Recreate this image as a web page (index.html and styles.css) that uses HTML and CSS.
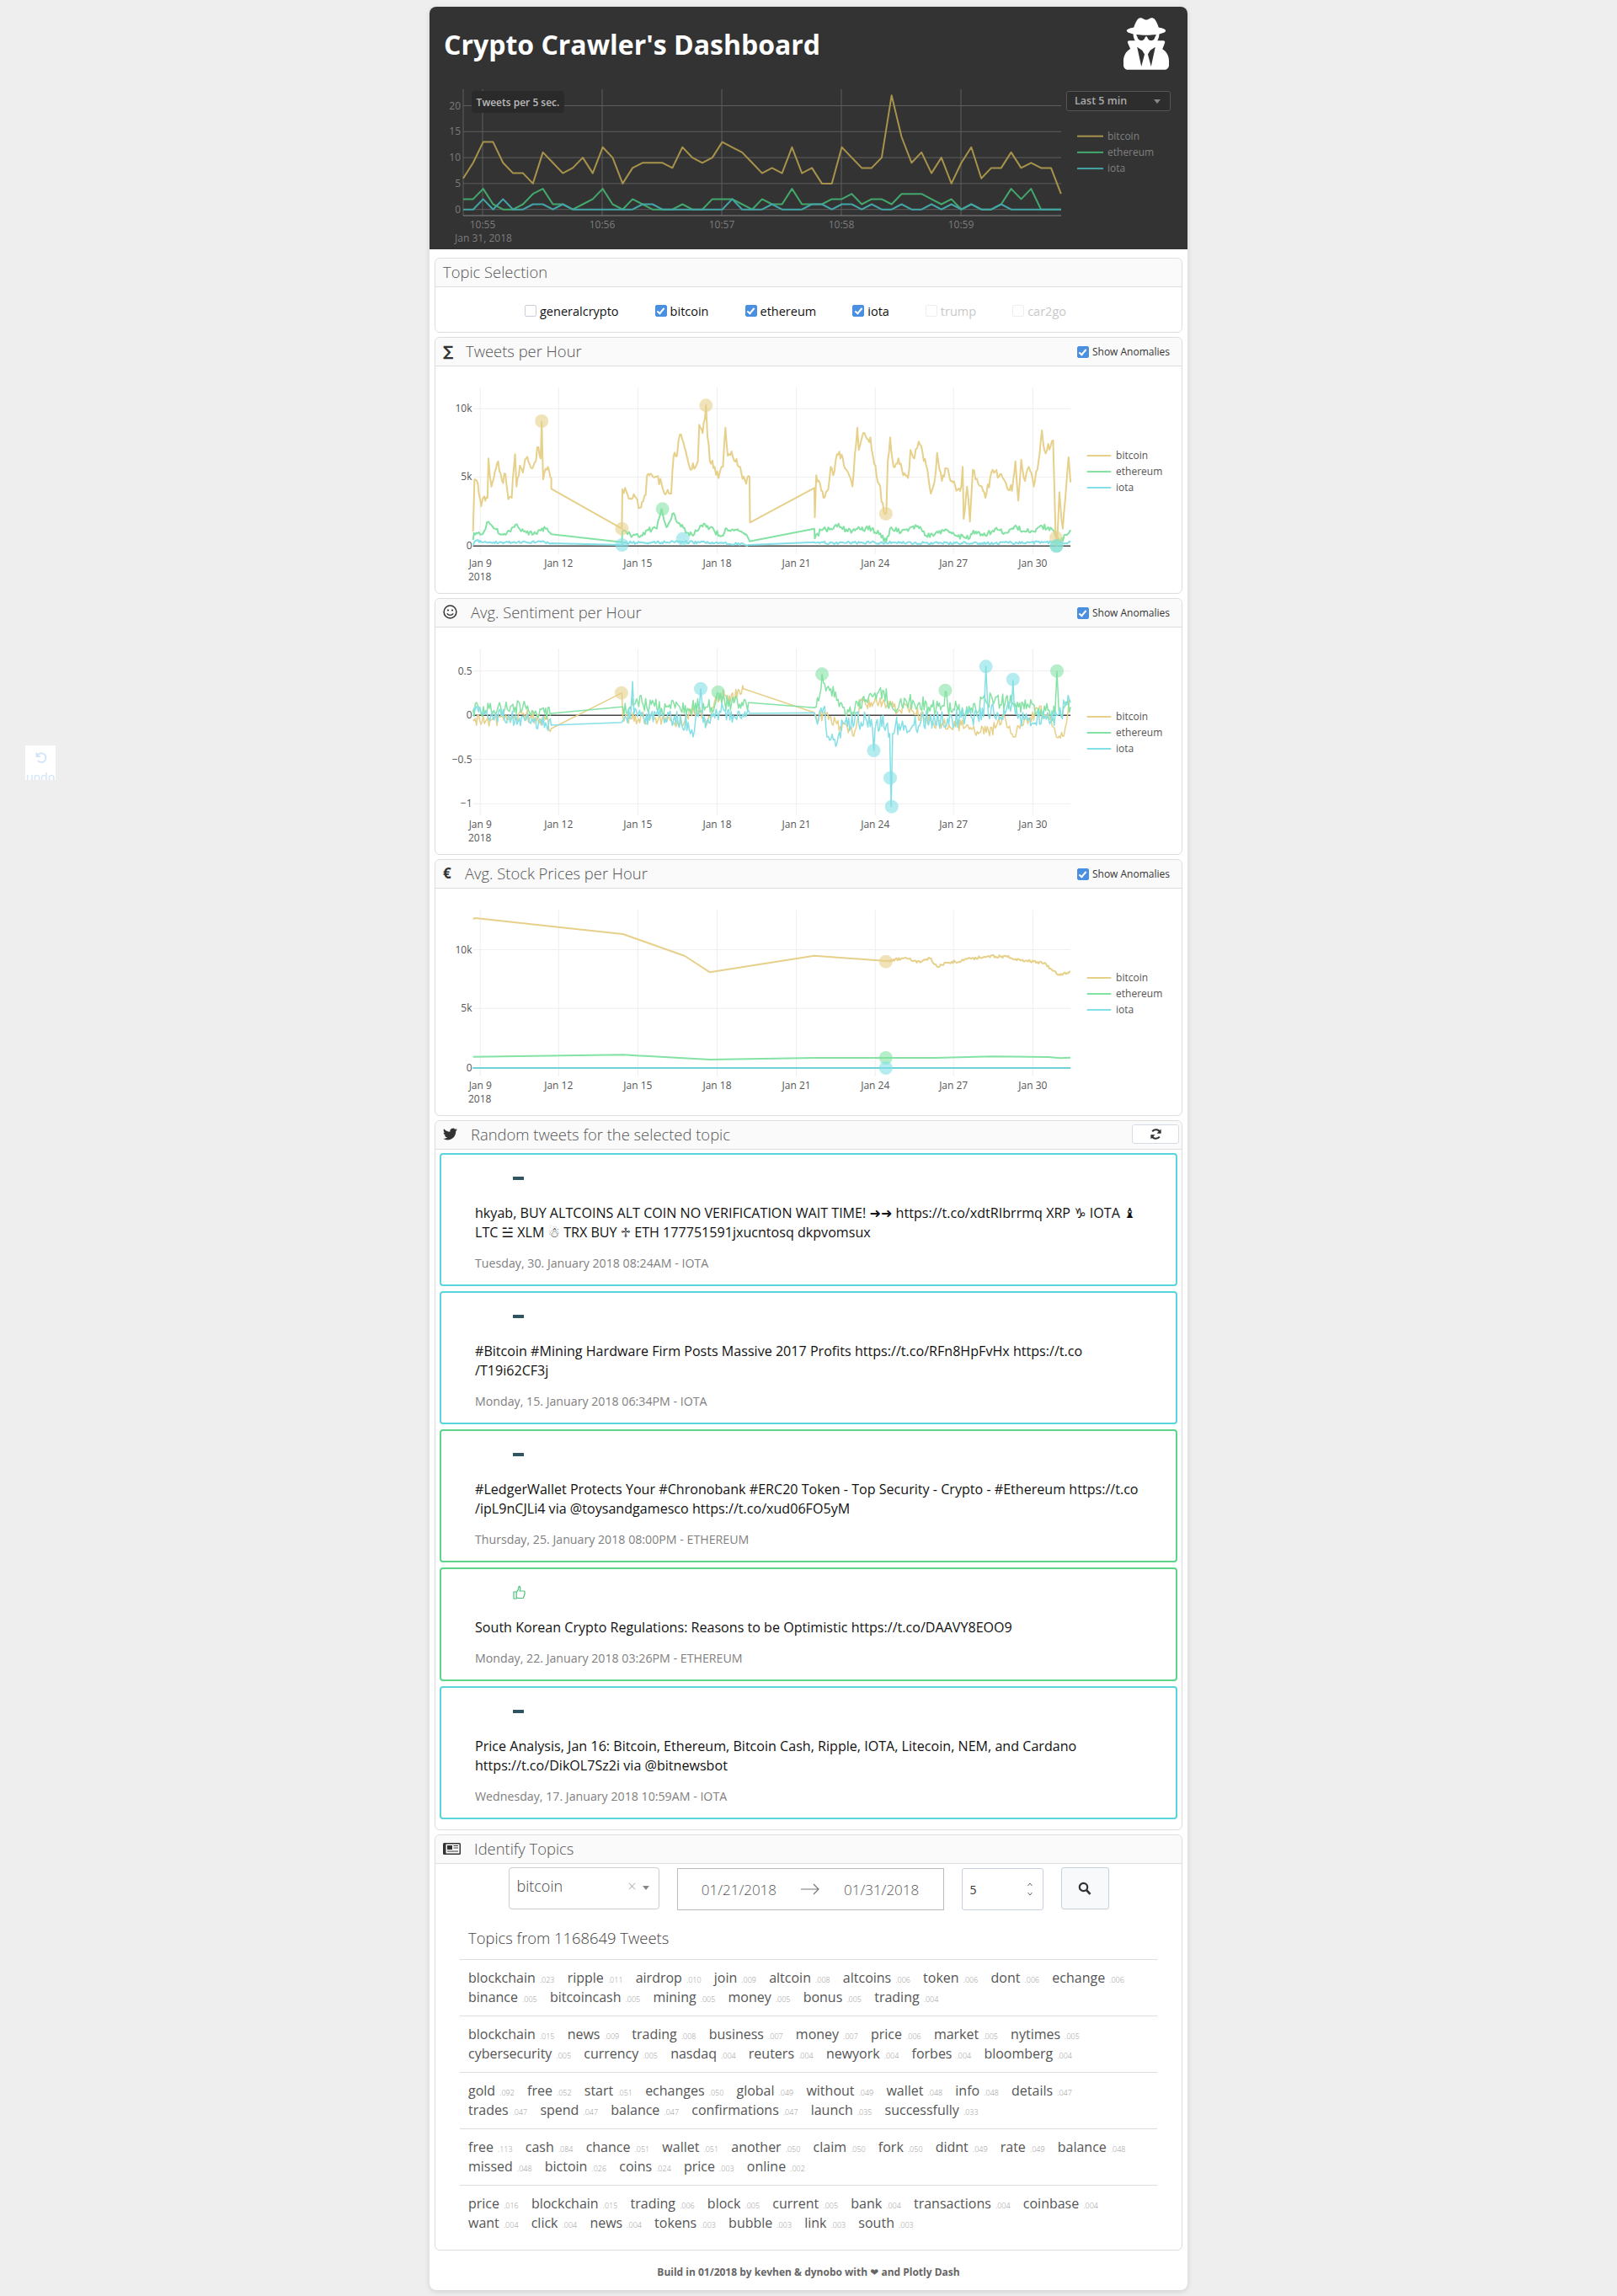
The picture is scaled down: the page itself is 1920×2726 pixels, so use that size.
FILE: index.html
```html
<!DOCTYPE html>
<html lang="en">
<head>
    <meta charset="UTF-8">
    <meta name="viewport" content="width=device-width, initial-scale=1.0">
    <title>Crypto Crawler's Dashboard</title>
    <link rel="stylesheet" href="styles.css">
</head>
<body>
    <div class="undo">
        <svg viewBox="0 0 20 20" width="18" height="18"><path d="M5 4v5h5M5.5 9a6 6 0 1 1 1 5.5" fill="none" stroke="#cfe3f7" stroke-width="2"/></svg>
        <span>undo</span>
    </div>

    <div class="page">
        <div class="header">
            <div class="header-top">
                <h1>Crypto Crawler's Dashboard</h1>
                <svg class="spy" viewBox="0 0 448 512"><path fill="#fff" d="M383.9 308.3l23.9-62.6c4-10.5-3.7-21.7-15-21.7h-58.5c11-18.9 17.8-40.6 17.8-64v-.3c39.2-7.8 64-19.1 64-31.7 0-13.3-27.3-25.1-70.1-33-9.2-32.8-27-65.8-40.6-82.8-9.5-11.9-25.9-15.6-39.5-8.8l-27.6 13.8c-9 4.5-19.6 4.5-28.6 0L182.1 3.4c-13.6-6.8-30-3.1-39.5 8.8-13.5 17-31.4 50-40.6 82.8-42.7 7.9-70 19.7-70 33 0 12.6 24.8 23.9 64 31.7v.3c0 23.4 6.8 45.1 17.8 64H56.3c-11.5 0-19.2 11.7-14.7 22.3l25.8 60.2C27.3 329.8 0 372.7 0 422.4v44.8C0 491.9 20.1 512 44.8 512h358.4c24.7 0 44.8-20.1 44.8-44.8v-44.8c0-48.4-25.8-90.4-64.1-114.1zM176 480l-41.6-192 49.6 32 24 40-32 120zm96 0l-32-120 24-40 49.6-32L272 480zm41.7-298.5c-3.9 11.9-7 24.6-16.5 33.4-10.1 9.3-48 22.4-64-25-2.8-8.4-15.4-8.4-18.3 0-17 50.2-56 32.4-64 25-9.5-8.8-12.7-21.5-16.5-33.4-.8-2.5-6.3-5.7-6.3-5.8v-10.8c28.3 3.6 61 5.8 96 5.8s67.7-2.2 96-5.8v10.8c-.1.1-5.6 3.2-6.4 5.8z"/></svg>
            </div>
            <div class="live-chart">
                <svg id="liveChart" width="900" height="196"></svg>
                <div class="live-badge">Tweets per 5 sec.</div>
                <div class="live-range">Last 5 min<span class="caret"></span></div>
            </div>
        </div>

        <div class="content">
            <div class="card">
                <div class="card-head"><span class="card-title">Topic Selection</span></div>
                <div class="topics">
                    <label class="topic"><span class="check"></span>generalcrypto</label>
                    <label class="topic"><span class="check on"></span>bitcoin</label>
                    <label class="topic"><span class="check on"></span>ethereum</label>
                    <label class="topic"><span class="check on"></span>iota</label>
                    <label class="topic off"><span class="check"></span>trump</label>
                    <label class="topic off"><span class="check"></span>car2go</label>
                </div>
            </div>

            <div class="card">
                <div class="card-head">
                    <span class="head-icon sigma">∑</span>
                    <span class="card-title">Tweets per Hour</span>
                    <label class="anomalies"><span class="check on"></span>Show Anomalies</label>
                </div>
                <svg class="chart" id="chartTweets" width="886" height="269"></svg>
            </div>

            <div class="card">
                <div class="card-head">
                    <svg class="head-icon wide-gap" width="17" height="17" viewBox="0 0 17 17"><circle cx="8.5" cy="8.5" r="7.4" fill="none" stroke="#333" stroke-width="1.5"/><circle cx="6" cy="6.5" r="1.1" fill="#333"/><circle cx="11" cy="6.5" r="1.1" fill="#333"/><path d="M4.8 10.3c1.6 2.8 5.8 2.8 7.4 0" fill="none" stroke="#333" stroke-width="1.4"/></svg>
                    <span class="card-title">Avg. Sentiment per Hour</span>
                    <label class="anomalies"><span class="check on"></span>Show Anomalies</label>
                </div>
                <svg class="chart" id="chartSentiment" width="886" height="269"></svg>
            </div>

            <div class="card">
                <div class="card-head">
                    <span class="head-icon euro">€</span>
                    <span class="card-title">Avg. Stock Prices per Hour</span>
                    <label class="anomalies"><span class="check on"></span>Show Anomalies</label>
                </div>
                <svg class="chart" id="chartStock" width="886" height="269"></svg>
            </div>

            <div class="card">
                <div class="card-head">
                    <svg class="head-icon wide-gap" width="17" height="17" viewBox="0 0 24 24"><path fill="#333" d="M23.953 4.57a10 10 0 01-2.825.775 4.958 4.958 0 002.163-2.723c-.951.555-2.005.959-3.127 1.184a4.92 4.92 0 00-8.384 4.482C7.69 8.095 4.067 6.13 1.64 3.162a4.822 4.822 0 00-.666 2.475c0 1.71.87 3.213 2.188 4.096a4.904 4.904 0 01-2.228-.616v.06a4.923 4.923 0 003.946 4.827 4.996 4.996 0 01-2.212.085 4.936 4.936 0 004.604 3.417 9.867 9.867 0 01-6.102 2.105c-.39 0-.779-.023-1.17-.067a13.995 13.995 0 007.557 2.209c9.053 0 13.998-7.496 13.998-13.985 0-.21 0-.42-.015-.63A9.935 9.935 0 0024 4.59z"/></svg>
                    <span class="card-title">Random tweets for the selected topic</span>
                    <button class="refresh"><svg width="15" height="15" viewBox="0 0 16 16"><path d="M13.5 6.5A5.8 5.8 0 0 0 3.4 4.6M2.5 9.5a5.8 5.8 0 0 0 10.1 1.9" fill="none" stroke="#333" stroke-width="2.2"/><path d="M14.5 1.5v5.6H9zM1.5 14.5V8.9H7z" fill="#333"/></svg></button>
                </div>
                <div class="tweets">
                    <div class="tweet iota">
                        <div class="tweet-icon"><span class="minus"></span></div>
                        <p class="tweet-text">hkyab, BUY ALTCOINS ALT COIN NO VERIFICATION WAIT TIME! ➜➜ https://t.co/xdtRIbrrmq XRP ♑ IOTA ♝ LTC ☱ XLM ☃ TRX BUY ♱ ETH 177751591jxucntosq dkpvomsux</p>
                        <p class="tweet-date">Tuesday, 30. January 2018 08:24AM - IOTA</p>
                    </div>
                    <div class="tweet iota">
                        <div class="tweet-icon"><span class="minus"></span></div>
                        <p class="tweet-text">#Bitcoin #Mining Hardware Firm Posts Massive 2017 Profits https://t.co/RFn8HpFvHx https://t.co<wbr>/T19i62CF3j</p>
                        <p class="tweet-date">Monday, 15. January 2018 06:34PM - IOTA</p>
                    </div>
                    <div class="tweet eth">
                        <div class="tweet-icon"><span class="minus"></span></div>
                        <p class="tweet-text">#LedgerWallet Protects Your #Chronobank #ERC20 Token - Top Security - Crypto - #Ethereum https://t.co<wbr>/ipL9nCJLi4 via @toysandgamesco https://t.co/xud06FO5yM</p>
                        <p class="tweet-date">Thursday, 25. January 2018 08:00PM - ETHEREUM</p>
                    </div>
                    <div class="tweet eth">
                        <div class="tweet-icon"><svg width="16" height="17" viewBox="0 0 16 17"><path d="M1 8h3.2v8H1zM4.2 8.5c1.6-1.6 2.7-3.6 3-7 1.8-.3 2.2 2.4 1 5.5h4.6c1.3 0 1.6 1.3 1 2.2.6.8.4 1.8-.3 2.3.3 1 0 1.8-.8 2.2.1 1.2-.5 1.8-1.6 1.8H7c-1.2 0-1.9-.6-2.8-.8" fill="none" stroke="#4cc47c" stroke-width="1.2"/></svg></div>
                        <p class="tweet-text">South Korean Crypto Regulations: Reasons to be Optimistic https://t.co/DAAVY8EOO9</p>
                        <p class="tweet-date">Monday, 22. January 2018 03:26PM - ETHEREUM</p>
                    </div>
                    <div class="tweet iota">
                        <div class="tweet-icon"><span class="minus"></span></div>
                        <p class="tweet-text">Price Analysis, Jan 16: Bitcoin, Ethereum, Bitcoin Cash, Ripple, IOTA, Litecoin, NEM, and Cardano https://t.co/DikOL7Sz2i via @bitnewsbot</p>
                        <p class="tweet-date">Wednesday, 17. January 2018 10:59AM - IOTA</p>
                    </div>
                </div>
            </div>

            <div class="card">
                <div class="card-head">
                    <svg class="head-icon wide-gap" width="21" height="14" viewBox="0 0 21 14"><rect width="21" height="14" rx="1.5" fill="#333"/><rect x="3.5" y="1.5" width="16" height="11" fill="#fff"/><rect x="5" y="3" width="6" height="5" fill="#333"/><path d="M12.5 3.5h5.5M12.5 6h5.5M5 10h13" stroke="#333" stroke-width="1.2"/></svg>
                    <span class="card-title">Identify Topics</span>
                </div>
                <div class="filters">
                    <div class="select">
                        <span>bitcoin</span>
                        <span class="select-clear">×</span>
                        <span class="caret"></span>
                    </div>
                    <div class="dates">
                        <span>01/21/2018</span>
                        <svg width="24" height="14" viewBox="0 0 24 14"><path d="M1 7h21M16 1l6 6-6 6" fill="none" stroke="#777" stroke-width="1.2"/></svg>
                        <span>01/31/2018</span>
                    </div>
                    <div class="number">
                        <span>5</span>
                        <svg width="8" height="18" viewBox="0 0 8 18"><path d="M1.5 5L4 2l2.5 3M1.5 13L4 16l2.5-3" fill="none" stroke="#666" stroke-width="1"/></svg>
                    </div>
                    <button class="search"><svg width="16" height="16" viewBox="0 0 16 16"><circle cx="6.5" cy="6.5" r="4.7" fill="none" stroke="#333" stroke-width="2.2"/><path d="M10 10l4.5 4.8" stroke="#333" stroke-width="2.6"/></svg></button>
                </div>
                <h3 class="topics-title">Topics from 1168649 Tweets</h3>
                <div class="lda">
                    <div class="lda-group">
                        <span class="word">blockchain <small>.023</small></span>
                        <span class="word">ripple <small>.011</small></span>
                        <span class="word">airdrop <small>.010</small></span>
                        <span class="word">join <small>.009</small></span>
                        <span class="word">altcoin <small>.008</small></span>
                        <span class="word">altcoins <small>.006</small></span>
                        <span class="word">token <small>.006</small></span>
                        <span class="word">dont <small>.006</small></span>
                        <span class="word">echange <small>.006</small></span>
                        <span class="word">binance <small>.005</small></span>
                        <span class="word">bitcoincash <small>.005</small></span>
                        <span class="word">mining <small>.005</small></span>
                        <span class="word">money <small>.005</small></span>
                        <span class="word">bonus <small>.005</small></span>
                        <span class="word">trading <small>.004</small></span>
                    </div>
                    <div class="lda-group">
                        <span class="word">blockchain <small>.015</small></span>
                        <span class="word">news <small>.009</small></span>
                        <span class="word">trading <small>.008</small></span>
                        <span class="word">business <small>.007</small></span>
                        <span class="word">money <small>.007</small></span>
                        <span class="word">price <small>.006</small></span>
                        <span class="word">market <small>.005</small></span>
                        <span class="word">nytimes <small>.005</small></span>
                        <span class="word">cybersecurity <small>.005</small></span>
                        <span class="word">currency <small>.005</small></span>
                        <span class="word">nasdaq <small>.004</small></span>
                        <span class="word">reuters <small>.004</small></span>
                        <span class="word">newyork <small>.004</small></span>
                        <span class="word">forbes <small>.004</small></span>
                        <span class="word">bloomberg <small>.004</small></span>
                    </div>
                    <div class="lda-group">
                        <span class="word">gold <small>.092</small></span>
                        <span class="word">free <small>.052</small></span>
                        <span class="word">start <small>.051</small></span>
                        <span class="word">echanges <small>.050</small></span>
                        <span class="word">global <small>.049</small></span>
                        <span class="word">without <small>.049</small></span>
                        <span class="word">wallet <small>.048</small></span>
                        <span class="word">info <small>.048</small></span>
                        <span class="word">details <small>.047</small></span>
                        <span class="word">trades <small>.047</small></span>
                        <span class="word">spend <small>.047</small></span>
                        <span class="word">balance <small>.047</small></span>
                        <span class="word">confirmations <small>.047</small></span>
                        <span class="word">launch <small>.035</small></span>
                        <span class="word">successfully <small>.033</small></span>
                    </div>
                    <div class="lda-group">
                        <span class="word">free <small>.113</small></span>
                        <span class="word">cash <small>.084</small></span>
                        <span class="word">chance <small>.051</small></span>
                        <span class="word">wallet <small>.051</small></span>
                        <span class="word">another <small>.050</small></span>
                        <span class="word">claim <small>.050</small></span>
                        <span class="word">fork <small>.050</small></span>
                        <span class="word">didnt <small>.049</small></span>
                        <span class="word">rate <small>.049</small></span>
                        <span class="word">balance <small>.048</small></span>
                        <span class="word">missed <small>.048</small></span>
                        <span class="word">bictoin <small>.026</small></span>
                        <span class="word">coins <small>.024</small></span>
                        <span class="word">price <small>.003</small></span>
                        <span class="word">online <small>.002</small></span>
                    </div>
                    <div class="lda-group">
                        <span class="word">price <small>.016</small></span>
                        <span class="word">blockchain <small>.015</small></span>
                        <span class="word">trading <small>.006</small></span>
                        <span class="word">block <small>.005</small></span>
                        <span class="word">current <small>.005</small></span>
                        <span class="word">bank <small>.004</small></span>
                        <span class="word">transactions <small>.004</small></span>
                        <span class="word">coinbase <small>.004</small></span>
                        <span class="word">want <small>.004</small></span>
                        <span class="word">click <small>.004</small></span>
                        <span class="word">news <small>.004</small></span>
                        <span class="word">tokens <small>.003</small></span>
                        <span class="word">bubble <small>.003</small></span>
                        <span class="word">link <small>.003</small></span>
                        <span class="word">south <small>.003</small></span>
                    </div>
                </div>
            </div>
        </div>

        <div class="footer">Build in 01/2018 by kevhen &amp; dynobo with ❤ and Plotly Dash</div>
    </div>

    <script src="charts.js"></script>
</body>
</html>
```

FILE: styles.css
```css
body {
    margin: 0;
    padding: 8px 0;
    background: #eeeeee;
    font-family: "Open Sans", "DejaVu Sans", sans-serif;
    color: #444;
}

.undo {
    position: fixed;
    left: 30px;
    top: 885px;
    width: 36px;
    height: 41px;
    background: #fff;
    overflow: hidden;
    text-align: center;
    color: #cfe3f7;
    font-size: 14px;
    line-height: 14px;
}

.undo svg {
    display: block;
    margin: 5px auto 8px;
}

.page {
    width: 900px;
    margin: 0 auto;
    background: #fff;
    border-radius: 8px;
    box-shadow: 0 2px 6px rgba(0, 0, 0, 0.12);
}

/* Dark header */
.header {
    height: 288px;
    background: #333;
    border-radius: 8px 8px 0 0;
}

.header-top {
    display: flex;
    align-items: center;
    justify-content: space-between;
    height: 92px;
    padding: 0 22px 4px 17px;
    box-sizing: border-box;
}

.header-top h1 {
    margin: 0;
    font-size: 32px;
    font-weight: 700;
    color: #fff;
}

.spy {
    width: 54px;
    height: 62px;
}

.live-chart {
    position: relative;
    height: 196px;
}

.live-chart svg {
    display: block;
}

.live-badge {
    position: absolute;
    left: 50px;
    top: 8px;
    width: 110px;
    height: 26px;
    border-radius: 4px;
    background: #2a2a2a;
    color: #bbb;
    font-size: 12px;
    font-weight: 600;
    line-height: 28px;
    text-align: center;
}

.live-range {
    position: absolute;
    left: 756px;
    top: 8px;
    width: 124px;
    height: 24px;
    box-sizing: border-box;
    padding-left: 9px;
    border: 1px solid #555;
    border-radius: 3px;
    background: #2d2d2d;
    color: #aaa;
    font-size: 12.5px;
    font-weight: 600;
    line-height: 22px;
}

.live-range .caret {
    position: absolute;
    right: 11px;
    top: 9px;
    border-top-color: #888;
}

.caret {
    display: inline-block;
    width: 0;
    height: 0;
    border-left: 4px solid transparent;
    border-right: 4px solid transparent;
    border-top: 5px solid #888;
}

/* Cards */
.content {
    display: flex;
    flex-direction: column;
    gap: 5px;
    padding: 10px 6px 0;
}

.card {
    border: 1px solid #ddd;
    border-radius: 6px;
    background: #fff;
}

.card-head {
    display: flex;
    align-items: center;
    box-sizing: border-box;
    height: 34px;
    padding: 0 5px 2px 9px;
    border-bottom: 1px solid #ddd;
    border-radius: 6px 6px 0 0;
    background: #fafafa;
}

.card-title {
    font-size: 18.4px;
    font-weight: 300;
    color: #555;
}

.head-icon {
    flex: none;
    margin-right: 10px;
    color: #333;
}

.head-icon.wide-gap {
    margin-right: 16px;
}

.sigma {
    width: 17px;
    margin-right: 10px;
    font-family: "DejaVu Sans", sans-serif;
    font-size: 17px;
    font-weight: 700;
}

.euro {
    width: 15px;
    margin-right: 11px;
    font-size: 17px;
    font-weight: 700;
}

.anomalies {
    display: flex;
    align-items: center;
    margin-left: auto;
    margin-right: 9px;
    margin-top: 2px;
    font-size: 12px;
    color: #333;
}

.anomalies .check {
    margin-right: 4px;
}

.chart {
    display: block;
}

.check {
    position: relative;
    display: inline-block;
    flex: none;
    box-sizing: border-box;
    width: 14px;
    height: 14px;
    border: 1px solid #ccd;
    border-radius: 2px;
    background: #fff;
}

.check.on {
    border-color: #4a8fe0;
    background: #4a8fe0;
}

.check.on::after {
    content: "";
    position: absolute;
    left: 3.5px;
    top: 1px;
    width: 3px;
    height: 7px;
    border: solid #fff;
    border-width: 0 2px 2px 0;
    transform: rotate(40deg);
}

.topics {
    display: flex;
    justify-content: center;
    align-items: center;
    height: 50px;
    padding: 3px 31px 0 0;
}

.topic {
    display: flex;
    align-items: center;
    margin-right: 43px;
    font-size: 14.5px;
    color: #111;
}

.topic:last-child {
    margin-right: 0;
}

.topic .check {
    margin-right: 4px;
}

.topic.off {
    color: #c8c8c8;
}

.topic.off .check {
    border-color: #eee;
}

/* Tweets */
.refresh {
    display: flex;
    align-items: center;
    justify-content: center;
    margin-left: auto;
    margin-right: -2px;
    width: 56px;
    height: 23px;
    padding: 0;
    border: 1px solid #d5dce6;
    border-radius: 3px;
    background: #fff;
}

.tweets {
    display: flex;
    flex-direction: column;
    gap: 6px;
    padding: 4px 5px 12px;
}

.tweet {
    padding: 15px 34px 15px 40px;
    border: 2px solid #5bd5dd;
    border-radius: 4px;
}

.tweet.eth {
    border-color: #5cd78a;
}

.tweet-icon {
    display: flex;
    align-items: center;
    height: 25px;
    margin-bottom: 18px;
    padding-left: 45px;
}

.minus {
    width: 13px;
    height: 4px;
    background: #2f5562;
}

.tweet-text {
    margin: 0;
    font-size: 16.1px;
    line-height: 23px;
    color: #111;
}

.tweet-date {
    margin: 15px 0 0;
    font-size: 14.2px;
    line-height: 20px;
    color: #808080;
}

/* Identify topics */
.filters {
    display: flex;
    justify-content: center;
    align-items: flex-start;
    gap: 21px;
    padding-top: 4px;
}

.select {
    display: flex;
    align-items: center;
    box-sizing: border-box;
    width: 179px;
    height: 50px;
    padding: 0 11px 6px 9px;
    border: 1px solid #ccc;
    border-radius: 4px;
    font-size: 18px;
    font-weight: 300;
    color: #444;
}

.select-clear {
    margin-left: auto;
    margin-right: 7px;
    font-size: 18px;
    color: #aaa;
}

.select .caret {
    margin-top: 4px;
}

.dates {
    display: flex;
    align-items: center;
    justify-content: center;
    gap: 28px;
    box-sizing: border-box;
    width: 317px;
    height: 50px;
    margin-top: 1px;
    border: 1px solid #bbb;
    font-size: 17px;
    font-weight: 300;
    color: #555;
}

.number {
    display: flex;
    align-items: center;
    justify-content: space-between;
    box-sizing: border-box;
    width: 97px;
    height: 50px;
    margin-top: 1px;
    padding: 0 11px 0 9px;
    border: 1px solid #c5d0e0;
    border-radius: 3px;
    font-size: 14px;
    color: #333;
}

.search {
    display: flex;
    align-items: center;
    justify-content: center;
    width: 57px;
    height: 50px;
    padding: 0;
    border: 1px solid #c6d0dc;
    border-radius: 3px;
    background: #f8f9fb;
}

.topics-title {
    margin: 20px 0 0 39px;
    font-size: 18.4px;
    font-weight: 300;
    line-height: 26px;
    color: #444;
}

.lda {
    margin: 12px 29px 0;
}

.lda-group {
    height: 67px;
    padding: 10px 18px 0 10px;
    box-sizing: border-box;
    border-top: 1px solid #ddd;
    font-size: 16px;
    line-height: 23px;
}

.lda-group:last-child {
    height: 77px;
}

.word {
    display: inline-block;
    margin-right: 11px;
    color: #555;
    white-space: nowrap;
}

.word small {
    margin-left: 1px;
    font-size: 9px;
    font-weight: 300;
    line-height: 1;
    color: #999;
}

.footer {
    padding: 17px 0 12px;
    font-size: 12px;
    font-weight: 700;
    line-height: 18px;
    text-align: center;
    color: #666;
}
```

FILE: charts.js
```js
const NS = 'http://www.w3.org/2000/svg';

function add(svg, name, attrs, text) {
    const el = document.createElementNS(NS, name);
    for (const key in attrs) el.setAttribute(key, attrs[key]);
    if (text) el.textContent = text;
    svg.appendChild(el);
    return el;
}

// small seeded random so the noise is the same on every load
let seed = 12345;
function rnd() {
    seed = (seed * 1103515 + 12345) % 2147483648;
    return seed / 2147483648 - 0.5;
}

// Coordinates below were read off a crop: x scaled 1.742, y scaled 3
const px = c => c / (1568 / 900) - 7;
const py = c => c / 3 - 34;

// walk the anchors and add jitter between them, amp 0 means a straight line
function trace(parts) {
    const out = [];
    parts.forEach(([amp, step, pts]) => {
        for (let i = 0; i < pts.length - 2; i += 2) {
            const x0 = pts[i], y0 = pts[i + 1], x1 = pts[i + 2], y1 = pts[i + 3];
            out.push([x0, y0]);
            if (!amp) continue;
            const n = Math.floor((x1 - x0) / step);
            for (let k = 1; k < n; k++) {
                const t = k / n;
                out.push([x0 + (x1 - x0) * t, y0 + (y1 - y0) * t + rnd() * amp * 2]);
            }
        }
        out.push([pts[pts.length - 2], pts[pts.length - 1]]);
    });
    return out.map(p => px(p[0]).toFixed(1) + ',' + py(p[1]).toFixed(1)).join(' ');
}

const BTC = '#e6d08a', ETH = '#84e2a4', IOTA = '#84e0e6';

function drawChart(id, cfg) {
    const svg = document.getElementById(id);
    const ticks = [105, 267, 431, 595, 759, 922, 1084, 1248];
    const labels = ['Jan 9', 'Jan 12', 'Jan 15', 'Jan 18', 'Jan 21', 'Jan 24', 'Jan 27', 'Jan 30'];

    ticks.forEach((t, i) => {
        add(svg, 'line', { x1: px(t), x2: px(t), y1: py(178), y2: py(770), stroke: '#eee' });
        add(svg, 'text', { x: px(t), y: py(803) + 4, 'text-anchor': 'middle', 'font-size': 12, fill: '#555' }, labels[i]);
    });
    add(svg, 'text', { x: px(104), y: py(851) + 4, 'text-anchor': 'middle', 'font-size': 12, fill: '#555' }, '2018');

    cfg.yTicks.forEach(([y, label]) => {
        add(svg, 'line', { x1: px(90), x2: px(1326), y1: py(y), y2: py(y), stroke: label === '0' ? '#444' : '#eee', 'stroke-width': label === '0' ? 1.5 : 1 });
        add(svg, 'text', { x: px(88), y: py(y) + 4, 'text-anchor': 'end', 'font-size': 12, fill: '#555' }, label);
    });

    cfg.lines.forEach(([color, width, parts]) => {
        add(svg, 'polyline', { points: trace(parts), fill: 'none', stroke: color, 'stroke-width': width, 'stroke-linejoin': 'round' });
    });

    cfg.marks.forEach(([color, x, y]) => {
        add(svg, 'circle', { cx: px(x), cy: py(y), r: 8, fill: color, opacity: 0.6 });
    });

    [['bitcoin', BTC, 420], ['ethereum', ETH, 477], ['iota', IOTA, 534]].forEach(([name, color, y]) => {
        add(svg, 'line', { x1: px(1360), x2: px(1410), y1: py(y), y2: py(y), stroke: color, 'stroke-width': 2 });
        add(svg, 'text', { x: px(1420), y: py(y) + 4, 'font-size': 12, fill: '#555' }, name);
    });
}

drawChart('chartTweets', {
    yTicks: [[253, '10k'], [496, '5k'], [742, '0']],
    lines: [
        [IOTA, 2, [
            [4, 2.5, [90, 738, 95, 722, 120, 730, 230, 727, 252, 732]],
            [0, 0, [252, 732, 398, 738]],
            [5, 2.5, [400, 730, 525, 728, 600, 730, 662, 738]],
            [0, 0, [662, 738, 796, 728]],
            [5, 2.5, [797, 730, 945, 730, 1100, 732, 1326, 728]]
        ]],
        [ETH, 2, [
            [9, 2.5, [90, 720, 92, 695, 110, 700, 122, 655, 135, 680, 150, 700, 160, 695, 178, 665, 195, 690, 215, 700, 240, 680, 252, 700]],
            [0, 0, [252, 700, 398, 728]],
            [9, 2.5, [399, 690, 415, 700, 435, 710, 450, 685, 470, 680, 480, 610, 490, 675, 505, 625, 515, 660, 535, 695, 545, 705, 560, 670, 575, 670, 590, 690, 605, 705, 615, 680, 635, 685, 655, 700, 662, 725]],
            [0, 0, [662, 725, 796, 680]],
            [10, 2.5, [797, 715, 810, 685, 830, 680, 846, 662, 865, 690, 885, 680, 915, 680, 930, 700, 945, 725, 955, 675, 975, 695, 1010, 670, 1035, 710, 1050, 690, 1070, 685, 1090, 705, 1110, 715, 1130, 690, 1150, 705, 1170, 680, 1195, 695, 1215, 675, 1235, 690, 1250, 690, 1267, 670, 1290, 685, 1305, 725, 1326, 685]]
        ]],
        [BTC, 2, [
            [16, 2.3, [90, 690, 93, 505, 100, 520, 107, 600, 113, 565, 120, 570, 122, 430, 128, 530, 135, 480, 142, 440, 150, 510, 157, 485, 163, 575, 170, 570, 177, 415, 180, 530, 187, 455, 193, 480, 200, 430, 207, 450, 213, 465, 220, 440, 223, 390, 230, 430, 232, 298, 235, 505, 245, 460, 252, 500, 252, 538]],
            [0, 0, [252, 538, 398, 680]],
            [16, 2.3, [399, 540, 410, 560, 425, 565, 435, 605, 447, 560, 450, 490, 462, 495, 470, 495, 480, 520, 488, 558, 500, 555, 505, 420, 512, 420, 518, 345, 525, 370, 532, 420, 540, 470, 555, 440, 558, 310, 565, 340, 572, 240, 575, 350, 580, 440, 590, 460, 598, 500, 607, 460, 612, 320, 617, 420, 625, 405, 640, 460, 655, 520, 662, 495, 663, 658]],
            [0, 0, [663, 658, 796, 535]],
            [16, 2.3, [797, 640, 800, 490, 808, 520, 815, 570, 825, 540, 830, 460, 835, 490, 843, 415, 855, 430, 862, 470, 868, 490, 875, 530, 885, 320, 888, 400, 897, 340, 905, 360, 912, 355, 920, 450, 930, 520, 940, 620, 945, 625, 948, 440, 953, 355, 960, 460, 970, 430, 980, 490, 990, 500, 995, 400, 1003, 430, 1012, 370, 1020, 410, 1030, 470, 1037, 555, 1045, 510, 1050, 410, 1060, 510, 1067, 465, 1075, 490, 1090, 545, 1100, 530, 1103, 460, 1105, 645, 1112, 530, 1118, 655, 1124, 470, 1135, 520, 1150, 570, 1165, 470, 1178, 495, 1190, 510, 1205, 545, 1212, 440, 1218, 580, 1224, 435, 1232, 510, 1240, 460, 1250, 530, 1260, 440, 1267, 330, 1272, 400, 1285, 385, 1290, 365, 1295, 690, 1298, 740, 1303, 550, 1310, 680, 1322, 425, 1326, 515]]
        ]]
    ],
    marks: [
        [BTC, 232, 297], [BTC, 398, 680], [BTC, 572, 241], [BTC, 944, 627], [BTC, 1296, 712],
        [ETH, 482, 610], [ETH, 1297, 742],
        [IOTA, 398, 738], [IOTA, 524, 716], [IOTA, 1297, 742]
    ]
});

drawChart('chartSentiment', {
    yTicks: [[257, '0.5'], [415, '0'], [572, '−0.5'], [730, '−1']],
    lines: [
        [BTC, 1.5, [
            [24, 2.3, [90, 430, 130, 430, 170, 420, 200, 415, 240, 430, 252, 462]],
            [0, 0, [252, 462, 398, 335]],
            [24, 2.3, [400, 420, 500, 430, 510, 455, 530, 420, 555, 400, 575, 440, 595, 350, 620, 345, 650, 322]],
            [0, 0, [652, 322, 796, 405]],
            [22, 2.3, [800, 420, 830, 420, 850, 455, 880, 470, 890, 370, 930, 370, 960, 385, 1000, 400, 1040, 440, 1100, 450, 1140, 475, 1170, 460, 1190, 420, 1205, 480, 1240, 430, 1260, 400, 1285, 420, 1300, 495, 1315, 460, 1326, 360]]
        ]],
        [ETH, 1.5, [
            [26, 2.3, [90, 395, 140, 395, 170, 380, 252, 408]],
            [0, 0, [252, 408, 398, 385]],
            [28, 2.3, [400, 385, 440, 370, 480, 390, 590, 380, 597, 335, 604, 370, 660, 370]],
            [0, 0, [662, 370, 796, 388]],
            [28, 2.3, [800, 385, 810, 320, 812, 268, 815, 300, 830, 320, 850, 370, 860, 410, 880, 390, 940, 330, 960, 395, 985, 360, 1040, 385, 1062, 380, 1067, 330, 1072, 385, 1130, 395, 1150, 360, 1200, 370, 1260, 390, 1294, 410, 1298, 258, 1302, 400, 1326, 385]]
        ]],
        [IOTA, 1.5, [
            [28, 2.3, [90, 400, 150, 420, 200, 430, 252, 450]],
            [0, 0, [252, 450, 398, 440]],
            [32, 2.3, [405, 420, 417, 400, 420, 295, 423, 410, 500, 430, 535, 440, 540, 480, 556, 420, 561, 320, 566, 440, 600, 400, 650, 420, 662, 408]],
            [0, 0, [662, 408, 796, 406]],
            [34, 2.3, [800, 430, 815, 390, 825, 490, 838, 500, 860, 440, 914, 430, 919, 540, 924, 440, 945, 450, 952, 480, 955, 740, 958, 480, 964, 450, 1000, 450, 1030, 430, 1146, 420, 1151, 240, 1156, 410, 1202, 400, 1207, 290, 1212, 410, 1230, 430, 1290, 420, 1326, 370]]
        ]]
    ],
    marks: [
        [BTC, 397, 335],
        [ETH, 597, 332], [ETH, 812, 268], [ETH, 1067, 326], [ETH, 1298, 257],
        [IOTA, 561, 320], [IOTA, 919, 540], [IOTA, 953, 638], [IOTA, 956, 740], [IOTA, 1151, 241], [IOTA, 1207, 287]
    ]
});

drawChart('chartStock', {
    yTicks: [[320, '10k'], [529, '5k'], [741, '0']],
    lines: [
        [BTC, 2, [
            [0, 0, [90, 210, 95, 207, 270, 240, 400, 264, 528, 342, 580, 400, 796, 341, 945, 360]],
            [5, 2.3, [945, 360, 985, 348, 1015, 365, 1035, 350, 1052, 382, 1068, 365, 1100, 360, 1120, 352, 1155, 342, 1195, 345, 1210, 355, 1250, 362, 1275, 370, 1290, 395, 1305, 410, 1326, 398]]
        ]],
        [ETH, 2, [[0, 0, [90, 701, 400, 694, 580, 711, 796, 705, 1045, 705, 1165, 700, 1280, 702, 1305, 706, 1326, 704]]]],
        ['#6fd3d8', 2, [[0, 0, [90, 741, 1326, 741]]]]
    ],
    marks: [[BTC, 944, 362], [ETH, 944, 705], [IOTA, 944, 741]]
});

// Live chart in the header, one value every 5 seconds
function drawLive() {
    const svg = document.getElementById('liveChart');
    const lx = i => 40 + i * 11.83;
    const ly = v => 148.7 - v * 6.16;
    const grid = '#5e5e5e', tick = '#7c7c7c';

    [['0', 0], ['5', 5], ['10', 10], ['15', 15], ['20', 20]].forEach(([label, v]) => {
        add(svg, 'line', { x1: 40, x2: 750, y1: ly(v), y2: ly(v), stroke: grid });
        add(svg, 'text', { x: 37, y: ly(v) + 4, 'text-anchor': 'end', 'font-size': 12, fill: tick }, label);
    });
    ['10:55', '10:56', '10:57', '10:58', '10:59'].forEach((label, i) => {
        const x = 63 + i * 142;
        add(svg, 'line', { x1: x, x2: x, y1: 6, y2: 156, stroke: grid });
        add(svg, 'text', { x: x, y: 171, 'text-anchor': 'middle', 'font-size': 12, fill: tick }, label);
    });
    add(svg, 'line', { x1: 40, x2: 40, y1: 6, y2: 156, stroke: grid });
    add(svg, 'line', { x1: 40, x2: 750, y1: 156, y2: 156, stroke: '#888' });
    add(svg, 'text', { x: 64, y: 187, 'text-anchor': 'middle', 'font-size': 12, fill: tick }, 'Jan 31, 2018');

    const series = [
        ['bitcoin', '#a8934c', [6, 9, 13, 13, 9, 7, 7, 5, 11, 9, 7, 8, 10, 7, 12, 10, 5, 8, 9, 9, 9, 8, 12, 10, 9, 10, 13, 12, 11, 9, 7, 8, 7, 12, 7, 8, 5, 5, 12, 10, 8, 8, 10, 22, 14, 9, 11, 7, 10, 5, 9, 12, 6, 8, 8, 11, 8, 9, 8, 8, 3]],
        ['ethereum', '#43a86c', [2, 2, 4, 1, 0, 0, 1, 3, 4, 1, 1, 0, 1, 2, 4, 1, 0, 2, 1, 0, 0, 0, 1, 0, 0, 2, 2, 2, 1, 0, 2, 1, 1, 4, 1, 1, 1, 2, 2, 3, 1, 2, 2, 1, 3, 3, 3, 2, 1, 2, 0, 1, 0, 0, 1, 4, 2, 4, 0, 0, 0]],
        ['iota', '#44a5a8', [0, 0, 2, 0, 2, 0, 0, 1, 1, 0, 1, 0, 0, 0, 0, 0, 0, 0, 1, 1, 0, 0, 0, 0, 0, 0, 0, 2, 0, 0, 0, 1, 0, 0, 0, 1, 1, 0, 1, 1, 0, 1, 0, 0, 1, 0, 0, 1, 0, 1, 0, 1, 0, 0, 1, 0, 0, 0, 0, 0, 0]]
    ];
    series.forEach(([name, color, data], n) => {
        const points = data.map((v, i) => lx(i).toFixed(1) + ',' + ly(v).toFixed(1)).join(' ');
        add(svg, 'polyline', { points, fill: 'none', stroke: color, 'stroke-width': 2, 'stroke-linejoin': 'round' });
        const y = 61.7 + n * 19.2;
        add(svg, 'line', { x1: 769, x2: 800, y1: y, y2: y, stroke: color, 'stroke-width': 2 });
        add(svg, 'text', { x: 805, y: y + 4, 'font-size': 12, fill: '#808080' }, name);
    });
}

drawLive();
```
